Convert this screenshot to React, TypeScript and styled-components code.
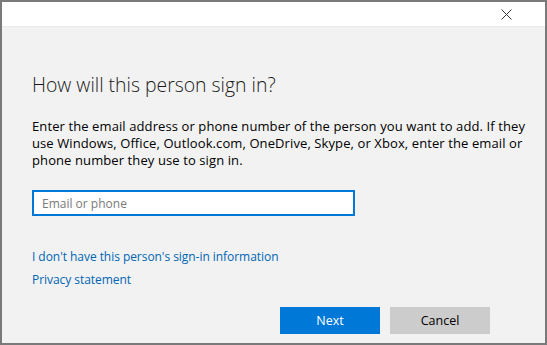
import styled, { createGlobalStyle } from 'styled-components';

const GlobalStyle = createGlobalStyle`
  html, body {
    margin: 0;
    padding: 0;
    background: #f2f2f2;
  }
  * {
    box-sizing: border-box;
  }
`;

const Window = styled.div`
  width: 547px;
  height: 345px;
  border: 2px solid #7a7a7a;
  background: #f2f2f2;
  display: flex;
  flex-direction: column;
  font-family: 'Open Sans', 'Noto Sans', sans-serif;
  color: #000;
`;

const TitleBar = styled.div`
  height: 25px;
  background: #fff;
  border-bottom: 1px solid #ebebeb;
  display: flex;
  justify-content: flex-end;
  align-items: center;
  padding-right: 33px;
`;

const CloseButton = styled.button`
  background: none;
  border: none;
  padding: 0;
  width: 12px;
  height: 12px;
  display: flex;
  align-items: center;
  justify-content: center;
  cursor: pointer;
`;

const Content = styled.div`
  flex: 1;
  padding: 44px 0 0 30px;
  display: flex;
  flex-direction: column;
`;

const Heading = styled.h1`
  margin: 0;
  font-size: 19.4px;
  font-weight: 300;
  line-height: 28px;
  color: #1a1a1a;
`;

const Description = styled.p`
  margin: 19px 0 0 0;
  width: 505px;
  font-size: 13px;
  line-height: 17px;
  color: #000;
  letter-spacing: 0.1px;
`;

const EmailInput = styled.input`
  margin-top: 21px;
  width: 323px;
  height: 26px;
  border: 2px solid #0078d7;
  background: #fff;
  padding: 0 8px;
  font-family: inherit;
  font-size: 12px;
  outline: none;
  &::placeholder {
    color: #7a7a7a;
  }
`;

const Links = styled.div`
  margin-top: 32px;
  display: flex;
  flex-direction: column;
  gap: 6px;
`;

const Link = styled.a`
  font-size: 12px;
  line-height: 17px;
  color: #0066b4;
  text-decoration: none;
  cursor: pointer;
  align-self: flex-start;
  letter-spacing: -0.05px;
`;

const Footer = styled.div`
  margin-top: auto;
  padding: 0 55px 9px 0;
  display: flex;
  justify-content: flex-end;
  gap: 10px;
`;

const Button = styled.button<{ $primary?: boolean }>`
  width: 100px;
  height: 27px;
  border: none;
  font-family: inherit;
  font-size: 12.5px;
  background: ${(p) => (p.$primary ? '#0078d7' : '#cccccc')};
  color: ${(p) => (p.$primary ? '#fff' : '#000')};
  cursor: pointer;
`;

export default function App() {
  return (
    <>
      <GlobalStyle />
      <Window>
        <TitleBar>
          <CloseButton aria-label="Close">
            <svg width="11" height="11" viewBox="0 0 11 11">
              <path d="M0.5 0.5 L10.5 10.5 M10.5 0.5 L0.5 10.5" stroke="#333" strokeWidth="1" />
            </svg>
          </CloseButton>
        </TitleBar>
        <Content>
          <Heading>How will this person sign in?</Heading>
          <Description>
            Enter the email address or phone number of the person you want to add. If they use
            Windows, Office, Outlook.com, OneDrive, Skype, or Xbox, enter the email or phone number
            they use to sign in.
          </Description>
          <EmailInput placeholder="Email or phone" />
          <Links>
            <Link>I don't have this person's sign-in information</Link>
            <Link>Privacy statement</Link>
          </Links>
          <Footer>
            <Button $primary>Next</Button>
            <Button>Cancel</Button>
          </Footer>
        </Content>
      </Window>
    </>
  );
}
